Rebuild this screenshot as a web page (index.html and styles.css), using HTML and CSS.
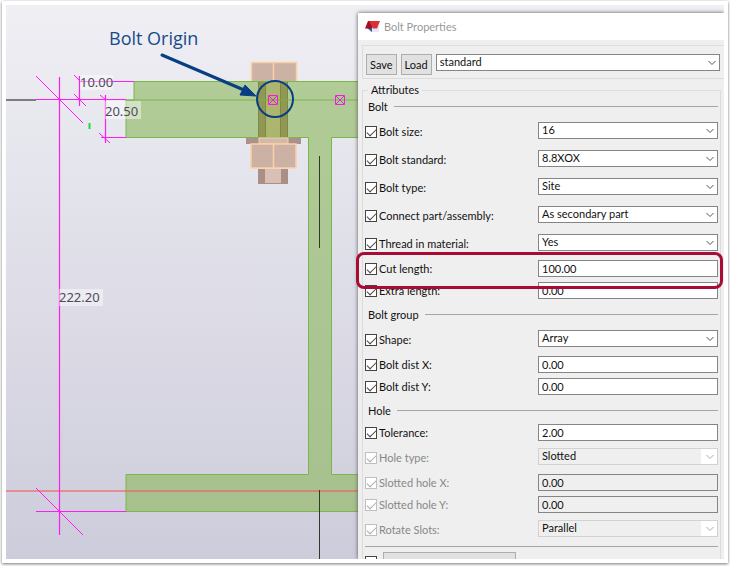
FILE: index.html
```html
<!DOCTYPE html>
<html lang="en">
<head>
<meta charset="utf-8">
<title>Bolt Properties</title>
<link rel="stylesheet" href="styles.css">
</head>
<body>
<main class="frame">
<div class="scene">
<svg class="drawing" width="352" height="554" viewBox="6 5 352 554" role="img" aria-label="Beam section with bolt">
  <path class="axis-gray" d="M6 100H36"/>
  <path class="steel" d="M134 81.500H360V137.500H331.500V474.500H360V511.500H126V474.500H308.500V137.500H126V100H134Z"/>
  <path class="steel-line" d="M126 100H360"/>
  <path class="axis-red" d="M6 491H358"/>
  <path class="axis-dark" d="M319.500 156V248M319.500 490V559"/>
  <path class="tick" d="M89.500 123V129"/>
  <g class="dim">
    <path class="straight" d="M59.500 77V535M36 99.500H126M79.500 76V106M79 81.500H134M105.500 95V143M101 137.500H126M36 511.500H126"/>
    <path d="M36 76L83 123M74 75L80 81M74 94L86 106M100 95L106 100M99 133L110 143M36 488L83 535"/>
  </g>
  <g>
    <rect class="shank" x="258" y="82" width="30" height="55"/>
    <rect class="shank-edge" x="258" y="82" width="7" height="55"/>
    <rect class="shank-edge" x="281" y="82" width="7" height="55"/>
    <path class="shank-line" d="M258.500 82V137M265.500 82V137M280.500 82V137M287.500 82V137"/>
    <path class="steel-line" d="M258 81.500H288M258 100H288"/>
    <rect class="hex" x="251" y="63" width="45" height="18"/>
    <path class="hex-line" d="M251.500 81V62.500H296.500V81M273.500 62V81"/>
    <rect class="washer" x="246" y="138" width="55" height="6"/>
    <rect class="washer-mid" x="259" y="138" width="29" height="6"/>
    <rect class="hex" x="251" y="144" width="45" height="24"/>
    <rect class="hex-line" x="251" y="144" width="45" height="24"/>
    <path class="hex-line" d="M273.500 144V168"/>
    <rect class="tip" x="258" y="169" width="30" height="15"/>
    <rect class="tip-mid" x="265" y="169" width="16" height="14"/>
  </g>
  <g class="node">
    <path d="M268.500 95.500H277.500V104.500H268.500ZM269 96L277 104M277 96L269 104"/>
    <path d="M335.500 95.500H344.500V104.500H335.500ZM336 96L344 104M344 96L336 104"/>
  </g>
  <circle class="origin" cx="275" cy="99" r="18"/>
  <path class="pointer" d="M162 55L244 90"/>
  <path class="pointer-head" d="M245 85L256 96L240 95Z"/>
  <rect class="dim-bg" x="80" y="75" width="33" height="15"/>
  <rect class="dim-bg" x="105" y="101" width="36" height="18"/>
  <rect class="dim-bg" x="59" y="289" width="44" height="17"/>
  <text class="dim-text" x="80" y="87">10.00</text>
  <text class="dim-text" x="105" y="116">20.50</text>
  <text class="dim-text" x="59" y="302">222.20</text>
  <text class="note" x="109" y="45">Bolt Origin</text>
</svg>

<section class="dialog" aria-label="Bolt Properties">
  <header class="titlebar">
    <svg width="15" height="13" viewBox="0 0 15 13" aria-hidden="true"><path fill="#e6e8f4" d="M5 6H14V12H5Z"/><path fill="#2862ab" d="M2 8H7V12Z"/><path fill="#a80f1a" d="M3 1L0 8.500H7L9 1Z"/><path fill="#dc3039" d="M4 1H15L12 8.500H8Z"/></svg>
    <span>Bolt Properties</span>
  </header>

  <div class="toolbar">
    <button type="button">Save</button>
    <button type="button">Load</button>
    <span class="pick"><select aria-label="Preset"><option>standard</option></select><svg class="chev" viewBox="0 0 8 6"><path d="M.5 1L4 4.500L7.500 1"/></svg></span>
  </div>

  <fieldset class="attributes">
    <legend>Attributes</legend>

    <h2>Bolt</h2>
    <div class="row choice"><label><input type="checkbox" checked>Bolt size:</label><span class="pick"><select aria-label="Bolt size"><option>16</option></select><svg class="chev" viewBox="0 0 8 6"><path d="M.5 1L4 4.500L7.500 1"/></svg></span></div>
    <div class="row choice"><label><input type="checkbox" checked>Bolt standard:</label><span class="pick"><select aria-label="Bolt standard"><option>8.8XOX</option></select><svg class="chev" viewBox="0 0 8 6"><path d="M.5 1L4 4.500L7.500 1"/></svg></span></div>
    <div class="row choice"><label><input type="checkbox" checked>Bolt type:</label><span class="pick"><select aria-label="Bolt type"><option>Site</option></select><svg class="chev" viewBox="0 0 8 6"><path d="M.5 1L4 4.500L7.500 1"/></svg></span></div>
    <div class="row choice"><label><input type="checkbox" checked>Connect part/assembly:</label><span class="pick"><select aria-label="Connect part/assembly"><option>As secondary part</option></select><svg class="chev" viewBox="0 0 8 6"><path d="M.5 1L4 4.500L7.500 1"/></svg></span></div>
    <div class="row choice"><label><input type="checkbox" checked>Thread in material:</label><span class="pick"><select aria-label="Thread in material"><option>Yes</option></select><svg class="chev" viewBox="0 0 8 6"><path d="M.5 1L4 4.500L7.500 1"/></svg></span></div>
    <div class="row marked"><label><input type="checkbox" checked>Cut length:</label><input class="value" type="text" aria-label="Cut length" value="100.00"><span class="highlight"></span></div>
    <div class="row"><label><input type="checkbox" checked>Extra length:</label><input class="value" type="text" aria-label="Extra length" value="0.00"></div>

    <h2>Bolt group</h2>
    <div class="row choice"><label><input type="checkbox" checked>Shape:</label><span class="pick"><select aria-label="Shape"><option>Array</option></select><svg class="chev" viewBox="0 0 8 6"><path d="M.5 1L4 4.500L7.500 1"/></svg></span></div>
    <div class="row"><label><input type="checkbox" checked>Bolt dist X:</label><input class="value" type="text" aria-label="Bolt dist X" value="0.00"></div>
    <div class="row"><label><input type="checkbox" checked>Bolt dist Y:</label><input class="value" type="text" aria-label="Bolt dist Y" value="0.00"></div>

    <h2>Hole</h2>
    <div class="row"><label><input type="checkbox" checked>Tolerance:</label><input class="value" type="text" aria-label="Tolerance" value="2.00"></div>
    <div class="row choice off"><label><input type="checkbox" checked disabled>Hole type:</label><span class="pick"><select aria-label="Hole type" disabled><option>Slotted</option></select><svg class="chev" viewBox="0 0 8 6"><path d="M.5 1L4 4.500L7.500 1"/></svg></span></div>
    <div class="row off"><label><input type="checkbox" checked disabled>Slotted hole X:</label><input class="value" type="text" aria-label="Slotted hole X" value="0.00" disabled></div>
    <div class="row off"><label><input type="checkbox" checked disabled>Slotted hole Y:</label><input class="value" type="text" aria-label="Slotted hole Y" value="0.00" disabled></div>
    <div class="row choice off"><label><input type="checkbox" checked disabled>Rotate Slots:</label><span class="pick"><select aria-label="Rotate slots" disabled><option>Parallel</option></select><svg class="chev" viewBox="0 0 8 6"><path d="M.5 1L4 4.500L7.500 1"/></svg></span></div>

    <div class="more"><input type="checkbox" aria-label="Enable"><button type="button" aria-label="More"></button></div>
  </fieldset>
</section>
</div>
</main>
</body>
</html>
```
FILE: styles.css
```css
* { box-sizing: border-box; }

body {
  margin: 0;
  height: 100vh;
  padding: 1px 2px 3px;
  overflow: hidden;
  background: #fff;
  font: 11px/16px Lato, "Noto Sans", sans-serif;
  color: #111;
}

.frame {
  height: 100%;
  padding: 4px;
  background: #fff;
  box-shadow: 0 1px 3px #777;
}

.scene {
  display: flex;
  height: 100%;
  overflow: hidden;
  background: linear-gradient(#efeff4, #cdccdb);
}

.drawing { flex: none; }
.drawing path, .drawing rect, .drawing circle { stroke-width: 1; fill: none; }
.drawing .dim path { stroke: #ff1cf4; }
.drawing .dim .straight { stroke-width: 1.2; }
.drawing .axis-gray { stroke: #7d7d80; stroke-width: 2; }
.drawing .steel { fill: #8ab85a99; stroke: #7ab648; }
.drawing .steel-line { stroke: #7ab648; }
.drawing .axis-red { stroke: #f0606099; stroke-width: 2; }
.drawing .axis-dark { stroke: #2c3a28; }
.drawing .tick { stroke: #1fdd2d; stroke-width: 2; }
.drawing .shank { fill: #aaa958a0; }
.drawing .shank-edge { fill: #76783c80; }
.drawing .shank-line { stroke: #7e8a40; }
.drawing .hex { fill: #ccb1a5; }
.drawing .hex-line { stroke: #fbd0a5; stroke-width: 1.5; }
.drawing .washer { fill: #a9928c; }
.drawing .washer-mid { fill: #d2b9ac; stroke: #fbd0a5; }
.drawing .tip { fill: #a98f88; }
.drawing .tip-mid { fill: #d9bfb4; }
.drawing .node path { stroke: #f01ce0; }
.drawing .origin { stroke: #083f82; stroke-width: 2; }
.drawing .pointer { stroke: #083f82; stroke-width: 3; stroke-linecap: round; }
.drawing .pointer-head { fill: #083f82; stroke: #083f82; }
.drawing .dim-bg { fill: #ffffff70; }
.dim-text { font: 13px "Noto Sans", sans-serif; fill: #4c4c5c; }
.note { font: 18px "Open Sans", sans-serif; fill: #164b88; }

.dialog {
  flex: 1;
  min-width: 0;
  margin-top: 8px;
  background: #efefef;
  box-shadow: 0 0 4px #555;
}

.titlebar {
  display: flex;
  align-items: center;
  gap: 4px;
  height: 27px;
  padding-left: 7px;
  background: #fff;
  color: #999;
}

.toolbar {
  display: flex;
  align-items: flex-start;
  gap: 4px;
  height: 34px;
  margin: 5px 0 0 4px;
  padding: 8px 4px 0 3px;
  border: 1px solid #dcdcdc;
  border-right: 0;
}

.toolbar button {
  height: 21px;
  padding: 0 3px;
  border: 1px solid #adadad;
  background: #e1e1e1;
  font: inherit;
  color: inherit;
}

.toolbar .pick { flex: 1; }

.attributes {
  min-width: 0;
  margin: 3px 3px 0 4px;
  padding: 0 2px;
  border: 1px solid #dcdcdc;
}

legend { margin: 0 0 -2px 3px; padding: 0 3px; }

h2 {
  display: flex;
  align-items: flex-start;
  gap: 6px;
  height: 24px;
  margin: 0;
  padding: 0 0 0 3px;
  font: inherit;
  line-height: 21px;
}

h2::after {
  content: "";
  flex: 1;
  height: 1px;
  margin-top: 10px;
  background: #a5a5a5;
}

.row {
  display: grid;
  grid-template-columns: 173px 1fr;
  align-items: start;
  height: 22px;
}

.choice { height: 28px; padding-top: 2px; }

label {
  display: flex;
  align-items: center;
  gap: 2px;
  height: 18px;
}

.choice label { height: 20px; }

input[type="checkbox"] {
  appearance: none;
  display: grid;
  place-items: center;
  flex: none;
  width: 12px;
  height: 12px;
  margin: 0;
  border: 1px solid #444;
  background: #fff;
}

input[type="checkbox"]:checked::before {
  content: "";
  width: 8px;
  height: 4px;
  margin-bottom: 2px;
  border: solid #444;
  border-width: 0 0 1px 1px;
  transform: rotate(-45deg);
}

.value, select {
  display: block;
  appearance: none;
  width: 100%;
  height: 17px;
  margin: 0;
  padding: 0 3px;
  border: 1px solid #858585;
  border-radius: 0;
  background: #fff;
  font: inherit;
  line-height: 15px;
  color: #111;
  opacity: 1;
}

select { padding-bottom: 1px; line-height: 14px; }

.pick { position: relative; }

.chev {
  position: absolute;
  top: 6px;
  right: 4px;
  width: 8px;
  height: 6px;
  fill: none;
  stroke: #555;
  pointer-events: none;
}

.off label { color: #888; }
.off input[type="checkbox"] { border-color: #bfbfbf; }
.off input[type="checkbox"]::before { border-color: #aaa; }
.off .value { background: #efefef; }
.off select {
  border-color: #d2d2d2;
  background: linear-gradient(to left, #fff 16px, #efefef 16px);
}
.off .chev { stroke: #aaa; }

.marked { position: relative; }

.highlight {
  position: absolute;
  inset: -8px -5px -7px -9px;
  border: 3px solid #a80c35;
  border-radius: 8px;
  pointer-events: none;
}

.more {
  display: flex;
  gap: 6px;
  padding-top: 5px;
  border-top: 1px solid #a5a5a5;
}

.more button {
  width: 133px;
  height: 20px;
  border: 1px solid #adadad;
  background: #e1e1e1;
}

.more input[type="checkbox"] { margin-top: 4px; }
```
